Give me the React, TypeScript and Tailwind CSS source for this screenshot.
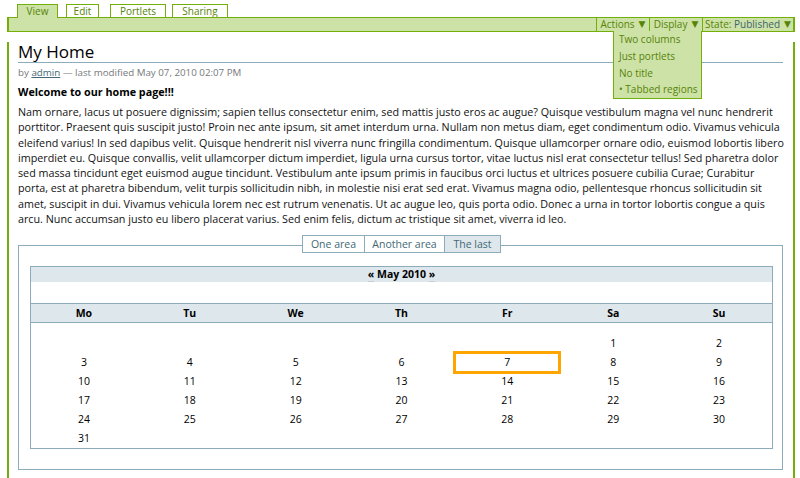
import type { ReactNode } from "react"

const PARAGRAPH_LINES = [
  "Nam ornare, lacus ut posuere dignissim; sapien tellus consectetur enim, sed mattis justo eros ac augue? Quisque vestibulum magna vel nunc hendrerit",
  "porttitor. Praesent quis suscipit justo! Proin nec ante ipsum, sit amet interdum urna. Nullam non metus diam, eget condimentum odio. Vivamus vehicula",
  "eleifend varius! In sed dapibus velit. Quisque hendrerit nisl viverra nunc fringilla condimentum. Quisque ullamcorper ornare odio, euismod lobortis libero",
  "imperdiet eu. Quisque convallis, velit ullamcorper dictum imperdiet, ligula urna cursus tortor, vitae luctus nisl erat consectetur tellus! Sed pharetra dolor",
  "sed massa tincidunt eget euismod augue tincidunt. Vestibulum ante ipsum primis in faucibus orci luctus et ultrices posuere cubilia Curae; Curabitur",
  "porta, est at pharetra bibendum, velit turpis sollicitudin nibh, in molestie nisi erat sed erat. Vivamus magna odio, pellentesque rhoncus sollicitudin sit",
  "amet, suscipit in dui. Vivamus vehicula lorem nec est rutrum venenatis. Ut ac augue leo, quis porta odio. Donec a urna in tortor lobortis congue a quis",
  "arcu. Nunc accumsan justo eu libero placerat varius. Sed enim felis, dictum ac tristique sit amet, viverra id leo.",
]

const CONTENT_TABS = [
  { label: "View", active: true, className: "ml-[10px] w-[41px]" },
  { label: "Edit", active: false, className: "ml-[8px] w-[33px]" },
  { label: "Portlets", active: false, className: "ml-[11px] w-[56px]" },
  { label: "Sharing", active: false, className: "ml-[6px] w-[56px]" },
]

const DISPLAY_OPTIONS = [
  { label: "Two columns", selected: false },
  { label: "Just portlets", selected: false },
  { label: "No title", selected: false },
  { label: "Tabbed regions", selected: true },
]

const REGION_TABS = [
  { label: "One area", selected: false, className: "w-[61px]" },
  { label: "Another area", selected: false, className: "w-[80px] border-l" },
  { label: "The last", selected: true, className: "w-[56px] border-l" },
]

const WEEKDAYS = ["Mo", "Tu", "We", "Th", "Fr", "Sa", "Su"]

// May 2010 starts on a Saturday
const WEEKS: Array<Array<number | null>> = [
  [null, null, null, null, null, 1, 2],
  [3, 4, 5, 6, 7, 8, 9],
  [10, 11, 12, 13, 14, 15, 16],
  [17, 18, 19, 20, 21, 22, 23],
  [24, 25, 26, 27, 28, 29, 30],
  [31, null, null, null, null, null, null],
]

const TODAY = 7

export default function App() {
  return (
    <div className="min-h-[478px] bg-white pt-1 pr-[5px] pl-[7px] font-['Open_Sans','DejaVu_Sans',sans-serif] text-black">
      <ContentTabs />
      <EditBar />
      <div className="border-x-2 border-[#74ae0b] pr-[10px] pb-6 pl-[9px]">
        <h1 className="mt-[10px] border-b border-[#8cacbb] text-[17px] leading-[20px] font-normal">
          My Home
        </h1>
        <div className="mt-[3px] text-[9.75px] leading-[14px] text-[#76797c]">
          by{" "}
          <a href="#" className="text-[#436976] underline">
            admin
          </a>{" "}
          — last modified May 07, 2010 02:07 PM
        </div>
        <p className="mt-[4px] text-[10.75px] leading-[16px] font-bold">
          Welcome to our home page!!!
        </p>
        <div className="mt-[5px] text-[10.75px] leading-[15.3px] text-[#111]">
          {PARAGRAPH_LINES.map((line) => (
            <div key={line} className="whitespace-nowrap">
              {line}
            </div>
          ))}
        </div>
        <TabbedRegions />
      </div>
    </div>
  )
}

function ContentTabs() {
  return (
    <div className="flex h-[13px] items-start">
      {CONTENT_TABS.map((tab) =>
        tab.active ? (
          <a
            key={tab.label}
            href="#"
            className={`relative z-10 flex h-[14px] items-center justify-center border-x border-t border-[#74ae0b] bg-[#cde2a7] text-[10px] text-[#578308] ${tab.className}`}
          >
            {tab.label}
          </a>
        ) : (
          <a
            key={tab.label}
            href="#"
            className={`flex h-[13px] items-center justify-center border-x border-t border-[#74ae0b] bg-white text-[10px] text-[#578308] ${tab.className}`}
          >
            {tab.label}
          </a>
        ),
      )}
    </div>
  )
}

function EditBar() {
  return (
    <div className="relative flex h-[15px] justify-end border-x-2 border-y border-[#74ae0b] bg-[#cde2a7] text-[10px] leading-[13px] text-[#578308]">
      <BarMenu className="w-[53px]">
        Actions
        <Arrow />
      </BarMenu>
      <BarMenu className="w-[53px]">
        Display
        <Arrow />
      </BarMenu>
      <BarMenu className="w-[91px]">
        State:&nbsp;<span className="text-[#3d6372]">Published</span>
        <Arrow />
      </BarMenu>

      <div className="absolute top-[13px] right-[91px] z-20 w-[89px] border-x border-b border-[#74ae0b] bg-[#cde2a7] pl-[5px]">
        {DISPLAY_OPTIONS.map((option) => (
          <div key={option.label} className="h-[16.75px] leading-[16.75px] whitespace-nowrap">
            {option.selected ? "• " : ""}
            {option.label}
          </div>
        ))}
      </div>
    </div>
  )
}

function BarMenu({
  className,
  children,
}: {
  className: string
  children: ReactNode
}) {
  return (
    <div
      className={`flex items-center justify-center border-l border-[#74ae0b] whitespace-nowrap ${className}`}
    >
      {children}
    </div>
  )
}

function Arrow() {
  return (
    <span className="ml-[4px] font-['DejaVu_Sans',sans-serif] text-[9px]">
      ▼
    </span>
  )
}

function TabbedRegions() {
  return (
    <div className="mt-[18px] border border-[#8cacbb] pr-[9px] pb-[20px] pl-[11px]">
      <div className="-mt-[11px] flex justify-center">
        <div className="flex h-[18px] border border-[#8cacbb] text-[10.5px] text-[#436976]">
          {REGION_TABS.map((tab) => (
            <a
              key={tab.label}
              href="#"
              className={`flex items-center justify-center border-[#8cacbb] ${tab.selected ? "bg-[#dee7ec]" : "bg-white"} ${tab.className}`}
            >
              {tab.label}
            </a>
          ))}
        </div>
      </div>
      <Calendar />
    </div>
  )
}

function Calendar() {
  return (
    <div className="mt-[13px] border border-[#8cacbb] text-[10.5px]">
      <div className="h-[15px] bg-[#dee7ec] text-center leading-[15px] font-bold">
        <a href="#" className="border-b border-[#cccccc]">
          «
        </a>{" "}
        May 2010{" "}
        <a href="#" className="border-b border-[#cccccc]">
          »
        </a>
      </div>
      <div className="h-[21px]" />
      <div className="grid h-[20px] grid-cols-7 border-y border-[#8cacbb] bg-[#dee7ec] font-bold">
        {WEEKDAYS.map((day) => (
          <div key={day} className="flex items-center justify-center">
            {day}
          </div>
        ))}
      </div>
      <div className="grid grid-cols-7 pt-[11px]">
        {WEEKS.flat().map((day, index) => (
          <div key={index} className="relative flex h-[19px] items-center justify-center">
            {day === TODAY && (
              <span className="absolute -inset-x-px -inset-y-[2px] border-[3px] border-[#ffa500]" />
            )}
            <span className="relative">{day}</span>
          </div>
        ))}
      </div>
    </div>
  )
}
